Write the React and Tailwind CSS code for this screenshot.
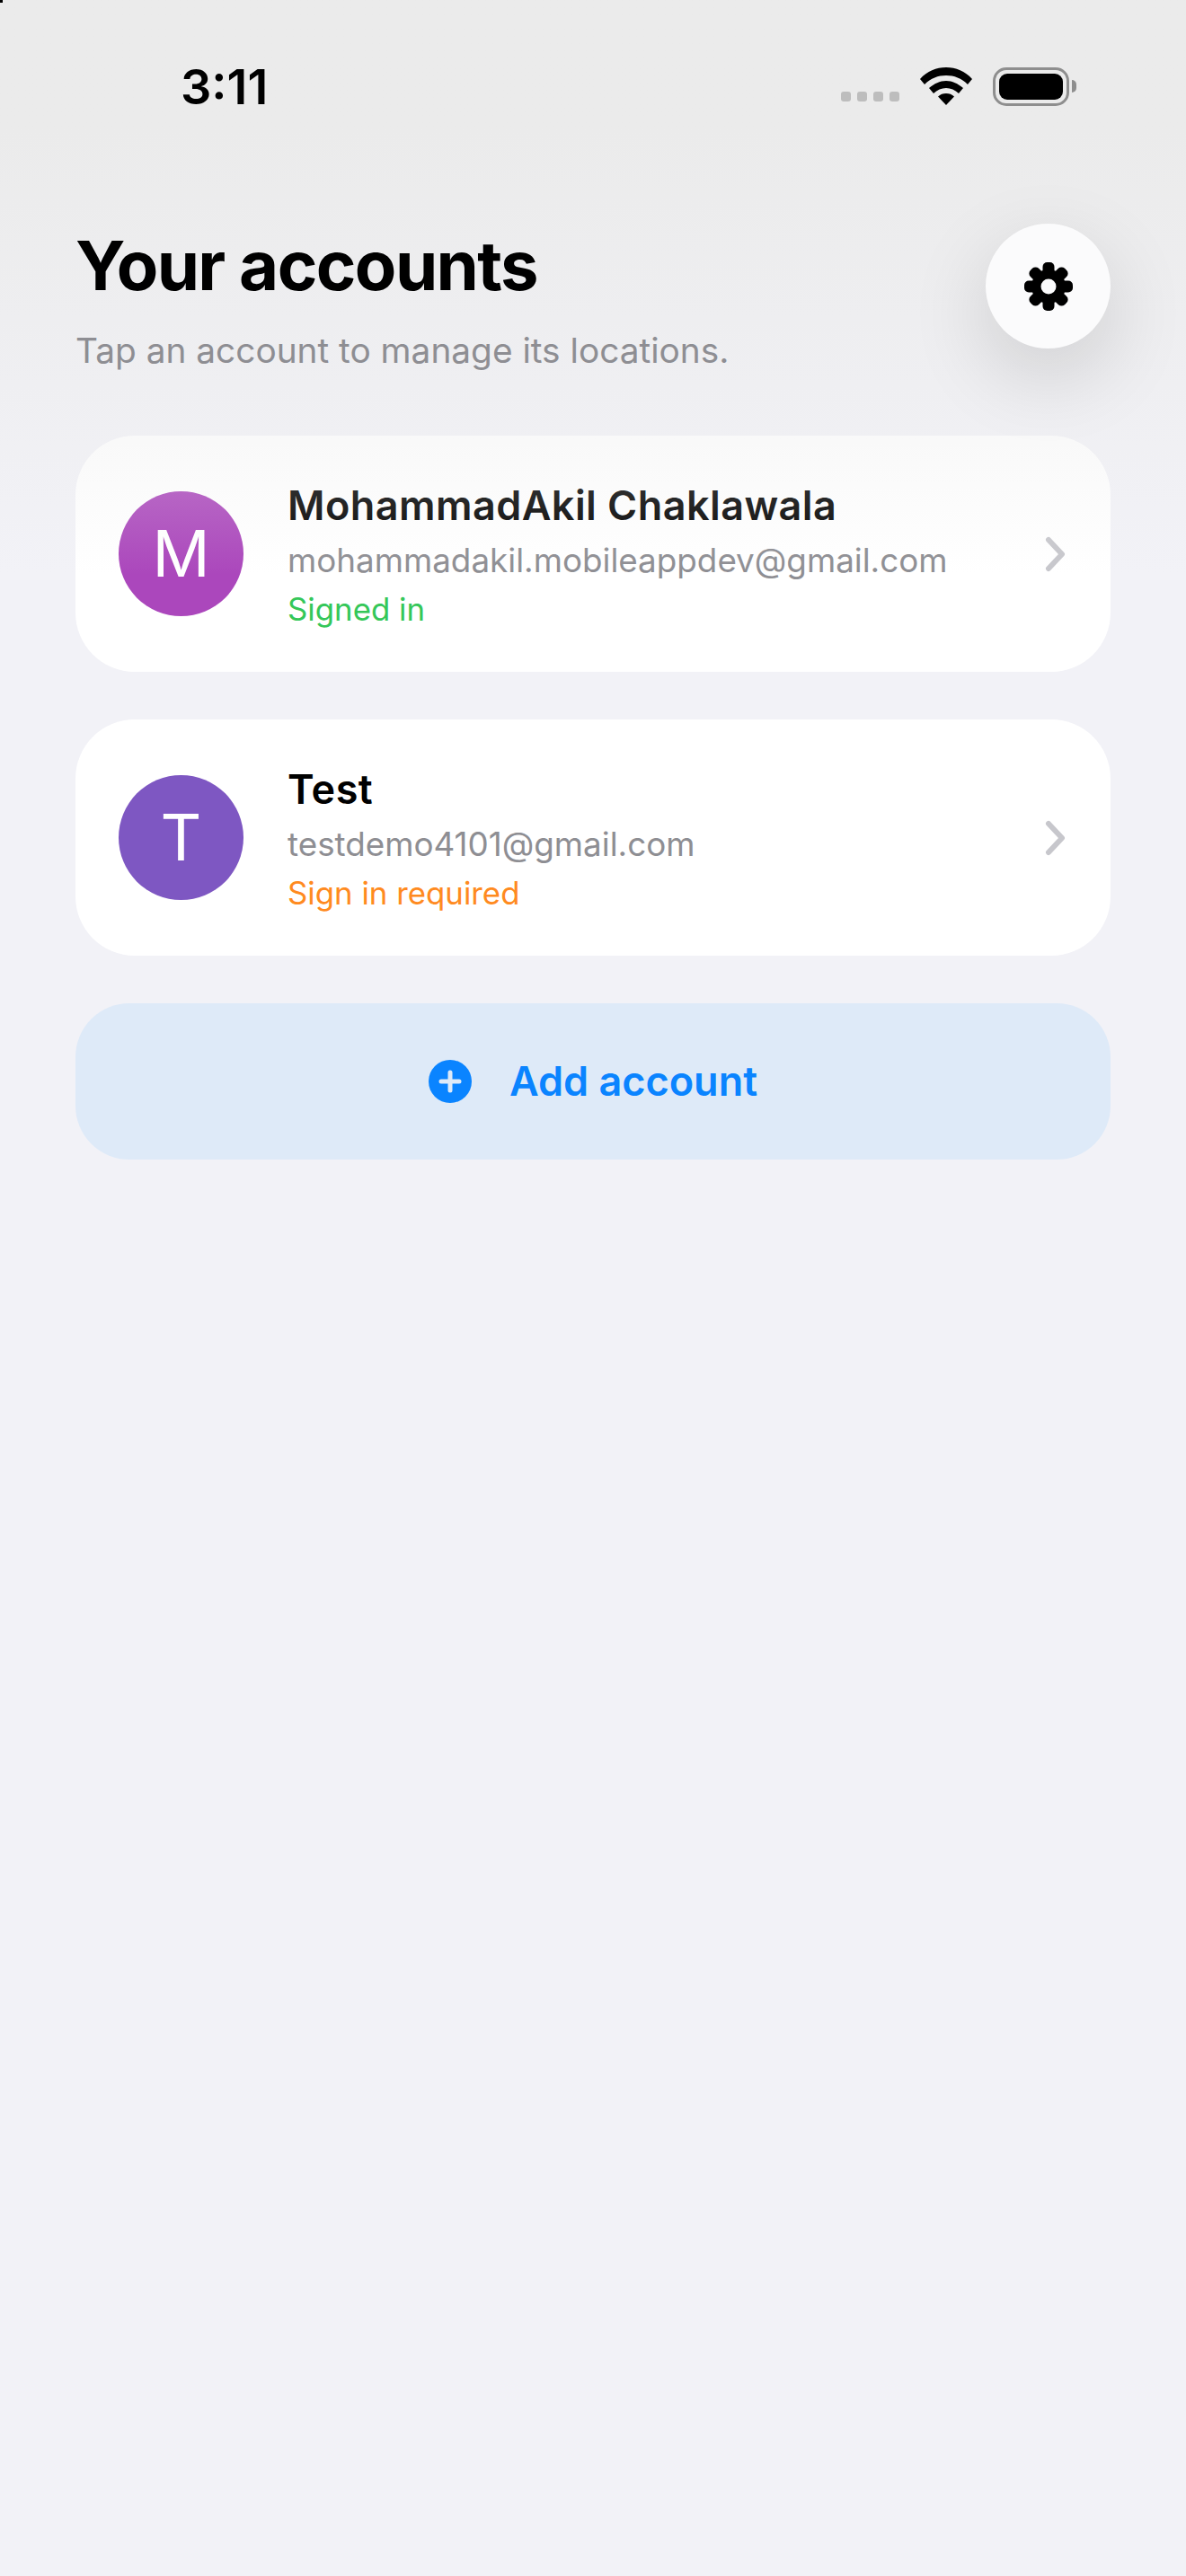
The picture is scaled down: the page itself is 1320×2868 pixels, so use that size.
const font = { fontFamily: 'Inter, "Noto Sans", sans-serif' }

function Gear() {
  const teeth = [0, 45, 90, 135, 180, 225, 270, 315]
  return (
    <svg width="54" height="54" viewBox="0 0 54 54">
      <circle cx="27" cy="27" r="19" fill="#000" />
      {teeth.map(a => (
        <rect key={a} x="20.5" y="0" width="13" height="16" rx="5" fill="#000" transform={`rotate(${a} 27 27)`} />
      ))}
      <circle cx="27" cy="27" r="8.5" fill="#fbfbfc" />
    </svg>
  )
}

function Wifi() {
  return (
    <svg width="58" height="42" viewBox="0 0 58 42" className="shrink-0">
      <path d="M29 0C18 0 8 4 0 13l5 6C12 12 20 9 29 9s17 3 24 10l5-6C50 4 40 0 29 0Z" fill="#000" />
      <path d="M29 15c-7 0-13 3-19 8l5 6c4-4 9-6 14-6s10 2 14 6l5-6c-6-5-12-8-19-8Z" fill="#000" />
      <path d="M29 29c-3.500 0-6.500 1-9 3.500L29 42l9-9.500C35.500 30 32.500 29 29 29Z" fill="#000" />
    </svg>
  )
}

function Battery() {
  return (
    <div className="flex items-center shrink-0">
      <div className="w-[85px] h-[43px] rounded-[15px] border-[3px] border-[#8e8e8e] p-[4px]">
        <div className="w-full h-full rounded-[9px] bg-black" />
      </div>
      <div className="w-[5px] h-[14px] ml-[3px] rounded-r-full bg-[#8e8e8e]" />
    </div>
  )
}

function Chevron() {
  return (
    <svg width="24" height="40" viewBox="0 0 24 40" className="shrink-0">
      <path d="M4 4l15 16L4 36" fill="none" stroke="#c7c7cc" strokeWidth="6" strokeLinecap="round" strokeLinejoin="round" />
    </svg>
  )
}

function AccountCard({ initial, color, name, nameColor, email, status, statusColor }) {
  return (
    <div className="flex items-center h-[263px] pl-[48px] pr-[49px] rounded-[66px] bg-white">
      <div className={`w-[139px] h-[139px] rounded-full flex items-center justify-center shrink-0 text-white text-[71px] ${color}`}>
        {initial}
      </div>
      <div className="ml-[49px] pt-[6px] flex-1 flex flex-col">
        <div className={`text-[45px] leading-[60px] font-semibold tracking-[0.43px] ${nameColor}`}>{name}</div>
        <div className="mt-[4px] text-[36.8px] leading-[54px] text-[#8e8e93]">{email}</div>
        <div className={`text-[34.8px] leading-[55px] ${statusColor}`}>{status}</div>
      </div>
      <Chevron />
    </div>
  )
}

export default function App() {
  return (
    <div className="relative w-[1320px] h-[2868px] overflow-hidden bg-[#f2f2f7]" style={font}>
      {/* fade that sits over the first card but under the header */}
      <div className="absolute inset-x-0 top-0 z-[1] h-[640px] pointer-events-none bg-gradient-to-b from-[#ebebeb] from-[22%] to-[rgba(235,235,235,0)]" />
      <div className="absolute left-0 top-0 z-[3] w-[3px] h-[3px] bg-black" />

      <div className="relative z-[2] flex items-center justify-between h-[192px] pl-[201px] pr-[122px]">
        <div className="mt-[2px] text-[54px] font-semibold leading-none text-black">3:11</div>
        <div className="flex items-center">
          <div className="flex gap-[7px] mr-[23px] mt-[22px]">
            <div className="w-[11px] h-[11px] rounded-[3px] bg-[#bdbdbd]" />
            <div className="w-[11px] h-[11px] rounded-[3px] bg-[#bdbdbd]" />
            <div className="w-[11px] h-[11px] rounded-[3px] bg-[#bdbdbd]" />
            <div className="w-[11px] h-[11px] rounded-[3px] bg-[#bdbdbd]" />
          </div>
          <Wifi />
          <div className="ml-[23px]"><Battery /></div>
        </div>
      </div>

      <div className="px-[84px]">
        <div className="relative z-[2] flex items-start justify-between h-[293px]">
          <div className="pt-[57px]">
            <h1 className="text-[76px] leading-[92px] font-bold tracking-[-1.6px] text-black">Your accounts</h1>
            <p className="mt-[24px] text-[38.8px] leading-[50px] text-[#8e8e93]">Tap an account to manage its locations.</p>
          </div>
          <button className="mt-[57px] w-[139px] h-[139px] rounded-full bg-[#fbfbfc] flex items-center justify-center shadow-[0_30px_90px_rgba(0,0,0,0.14)]">
            <Gear />
          </button>
        </div>

        <div className="flex flex-col gap-[53px]">
          <AccountCard
            initial="M"
            color="bg-[#ab47bc]"
            name="MohammadAkil Chaklawala"
            nameColor="text-black"
            email="mohammadakil.mobileappdev@gmail.com"
            status="Signed in"
            statusColor="text-[#34c759]"
          />
          <AccountCard
            initial="T"
            color="bg-[#7e57c2]"
            name="Test"
            nameColor="text-black"
            email="testdemo4101@gmail.com"
            status="Sign in required"
            statusColor="text-[#ff8a20]"
          />
          <button className="flex items-center justify-center h-[174px] rounded-[60px] bg-[#deeaf8]">
            <svg width="48" height="48" viewBox="0 0 48 48" className="shrink-0">
              <circle cx="24" cy="24" r="24" fill="#0a84ff" />
              <path d="M24 14v20M14 24h20" stroke="#deeaf8" strokeWidth="5" strokeLinecap="round" />
            </svg>
            <span className="ml-[42px] text-[45px] font-semibold text-[#0a84ff]">Add account</span>
          </button>
        </div>
      </div>
    </div>
  )
}
